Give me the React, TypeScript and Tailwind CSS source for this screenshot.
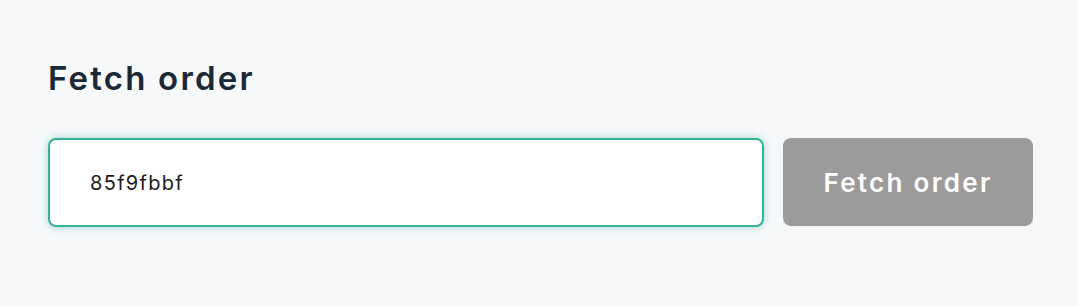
export default function App() {
  return (
    <div className="min-h-[306px] w-full bg-[#f7f8fa] pl-[48px] pr-[40px] pt-[56px] font-['Inter',sans-serif]">
      <h2 className="text-[33px] font-semibold leading-[44px] tracking-[2.2px] text-[#1b2836]">Fetch order</h2>
      <div className="mt-[38px] flex items-stretch gap-[19px]">
        <div className="flex h-[89px] w-[716px] shrink-0 items-center rounded-[8px] border-2 border-[#37b29a] bg-white pl-[40px] shadow-[0_0_8px_rgba(55,178,154,0.45)]">
          <input
            className="w-full bg-transparent text-[20px] tracking-[1.3px] text-[#1b1b1b] outline-none"
            defaultValue="85f9fbbf"
          />
        </div>
        <button
          type="button"
          className="flex h-[88px] w-[250px] shrink-0 items-center justify-center rounded-[8px] bg-[#9b9b9b] text-[26px] font-semibold tracking-[2.3px] text-white"
        >
          Fetch order
        </button>
      </div>
    </div>
  );
}
